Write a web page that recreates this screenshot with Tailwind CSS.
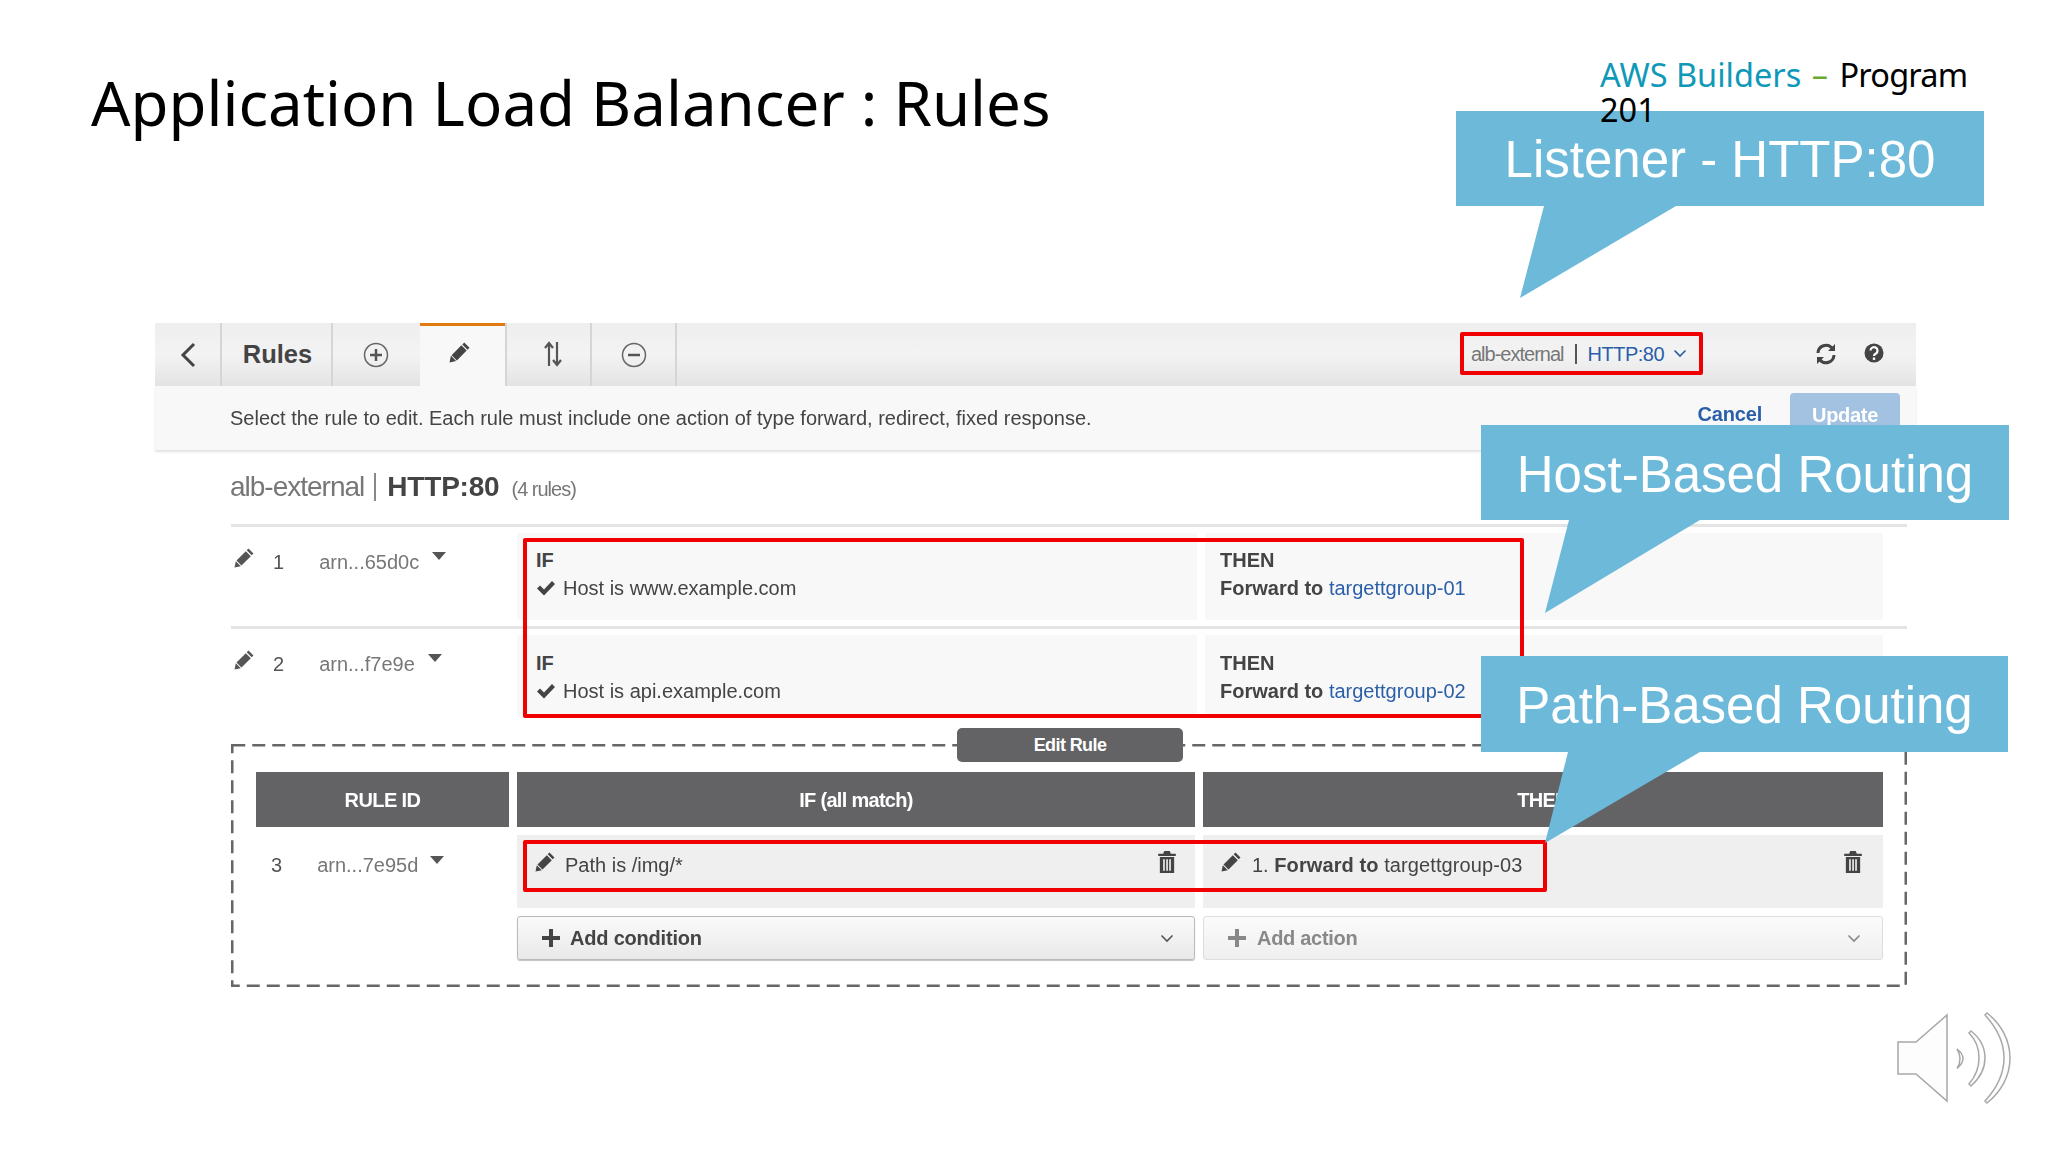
<!DOCTYPE html>
<html lang="en">
<head>
    <meta charset="UTF-8">
    <title>Application Load Balancer : Rules</title>
    <script src="https://cdn.jsdelivr.net/npm/@tailwindcss/browser@4"></script>
</head>
<body class="bg-white">
    <!-- icon sprite -->
    <svg class="hidden">
        <symbol id="pencil" viewBox="0 0 20 20">
            <path d="M14.500 0.500l5 5-1.800 1.800-5-5zM11.800 3.200l5 5-9.300 9.300-5-5zM1.800 13.200l5 5L0.500 19.500z" fill="currentColor"/>
        </symbol>
        <symbol id="trash" viewBox="0 0 18 20">
            <path d="M6.500 0h5l1 2.500H17v2H1v-2h4.500zM2.500 5.500h13V20h-13zM5.500 7.500v10.500h1.500V7.500zM8.300 7.500v10.500h1.500V7.500zM11 7.500v10.500h1.500V7.500z" fill="currentColor" fill-rule="evenodd"/>
        </symbol>
        <symbol id="check" viewBox="0 0 20 16">
            <path d="M1 8.500l3-3 4 4 8-8.500 3 3L8 15.500z" fill="currentColor"/>
        </symbol>
        <symbol id="plus" viewBox="0 0 18 18">
            <path d="M7 0h4v7h7v4h-7v7H7v-7H0V7h7z" fill="currentColor"/>
        </symbol>
        <symbol id="caret" viewBox="0 0 14 8">
            <path d="M0 0h14L7 8z" fill="currentColor"/>
        </symbol>
        <symbol id="chevron" viewBox="0 0 14 9">
            <path d="M1.500 1.500L7 7l5.500-5.500" fill="none" stroke="currentColor" stroke-width="1.600"/>
        </symbol>
    </svg>

    <div class="relative w-[2048px] h-[1152px] overflow-hidden bg-white font-['Liberation_Sans',sans-serif]">
        <!-- slide title -->
        <header class="flex h-[323px] pl-[91px] pt-[62px]">
            <h1 class="w-[1509px] text-[61.8px] leading-[80px] text-black font-['Noto_Sans',sans-serif]">Application Load Balancer : Rules</h1>
            <!-- 201 wraps over the first callout -->
            <p class="relative z-10 mt-[-5px] h-[72px] w-[385px] text-[32.5px] leading-[35px] text-black font-['Noto_Sans',sans-serif]"><span class="text-[#0f99b8]">AWS Builders</span> <span class="ml-[2px] mr-[3px] text-[#6aab2f]">–</span> <span class="tracking-[-0.8px]">Program</span> 201</p>
        </header>

        <!-- console screenshot -->
        <main class="ml-[155px] w-[1761px] blur-[0.4px]">
            <!-- toolbar -->
            <div class="flex h-[63px] bg-gradient-to-b from-[#eeeeef] via-[#f3f3f4] to-[#e3e3e4] text-[#444]">
                <div class="flex w-[67px] items-center justify-center border-r-2 border-[#d5d5d6]">
                    <svg width="16" height="26" viewBox="0 0 16 26"><path d="M14 2L3 13l11 11" fill="none" stroke="#444" stroke-width="3"/></svg>
                </div>
                <div class="flex w-[111px] items-center justify-center border-r-2 border-[#d5d5d6] pl-[2px] pb-[1px] text-[25.500px] font-bold">Rules</div>
                <div class="flex w-[87px] items-center justify-center pr-[2px]">
                    <svg width="26" height="26" viewBox="0 0 26 26"><circle cx="13" cy="13" r="11.500" fill="none" stroke="#666" stroke-width="1.500"/><path d="M13 7v12M7 13h12" stroke="#555" stroke-width="2.500"/></svg>
                </div>
                <div class="flex w-[85px] items-center justify-center border-t-[3px] border-[#e07b10] bg-[#f8f8f9] pb-[7px] pr-[6px]">
                    <svg class="w-[21px] h-[21px] text-[#444]"><use href="#pencil"/></svg>
                </div>
                <div class="flex w-[87px] items-center justify-center border-x-2 border-[#d5d5d6] pl-[8px] pb-[2px]">
                    <svg width="20" height="26" viewBox="0 0 20 26"><path d="M6 25V3M2 7l4-5 4 5M14 1v22M10 19l4 5 4-5" fill="none" stroke="#555" stroke-width="2.200"/></svg>
                </div>
                <div class="flex w-[85px] items-center justify-center border-r-2 border-[#d5d5d6]">
                    <svg width="26" height="26" viewBox="0 0 26 26"><circle cx="13" cy="13" r="11.500" fill="none" stroke="#666" stroke-width="1.500"/><path d="M7 13h12" stroke="#555" stroke-width="2.500"/></svg>
                </div>
                <div class="flex flex-1 items-center pl-[794px] pb-[2px]">
                    <span class="text-[20px] tracking-[-1px] text-[#777]">alb-external</span>
                    <span class="ml-[11px] mr-[11px] h-[20px] w-[2px] bg-[#555]"></span>
                    <span class="text-[20px] tracking-[-0.5px] text-[#2a5fa8]">HTTP:80</span>
                    <svg class="ml-[9px] w-[14px] h-[9px] text-[#2a5fa8]"><use href="#chevron"/></svg>
                    <svg class="ml-[128px]" width="22" height="22" viewBox="0 0 22 22"><path d="M3 10a8 8 0 0 1 14-5M19 12a8 8 0 0 1-14 5" fill="none" stroke="#444" stroke-width="3"/><path d="M20 1v7h-7zM2 21v-7h7z" fill="#444"/></svg>
                    <svg class="ml-[27px] mb-[2px]" width="20" height="22" viewBox="0 0 20 22"><circle cx="10" cy="11" r="9.500" fill="#444"/><path d="M6.500 8.500a3.500 3.500 0 1 1 5.500 3c-1.300.8-2 1.200-2 2.500" fill="none" stroke="#fff" stroke-width="2.200"/><rect x="8.800" y="15.500" width="2.400" height="2.400" fill="#fff"/></svg>
                </div>
            </div>
            <!-- hint bar -->
            <div class="flex h-[64px] items-center bg-[#f8f8f9] pl-[75px] shadow-[0_2px_2px_rgba(0,0,0,0.12)]">
                <p class="flex-1 text-[20px] text-[#444]">Select the rule to edit. Each rule must include one action of type forward, redirect, fixed response.</p>
                <span class="mr-[28px] pb-[8px] text-[20px] font-bold tracking-[-0.2px] text-[#2a5fa8]">Cancel</span>
                <span class="mr-[16px] mt-[7px] flex h-[57px] w-[110px] items-start justify-center self-start rounded-t-[4px] bg-[#a3c1e0] pt-[7px] text-[20px] font-bold tracking-[-0.3px] text-white">Update</span>
            </div>
            <!-- rule list -->
            <div class="ml-[76px] w-[1676px]">
                <div class="flex h-[77px] items-center border-b-[3px] border-[#e4e4e5] pb-[3px] pt-[2px]">
                    <span class="ml-[-1px] text-[28px] tracking-[-1px] text-[#777]">alb-external</span>
                    <span class="ml-[10px] mr-[11px] h-[28px] w-[2px] bg-[#888]"></span>
                    <span class="text-[28px] font-bold tracking-[-0.2px] text-[#444]">HTTP:80</span>
                    <span class="ml-[12px] mt-[4px] text-[20px] tracking-[-1px] text-[#777]">(4 rules)</span>
                </div>
                <div class="grid h-[102px] grid-cols-[278px_680px_678px] gap-x-[8px] border-b-[3px] border-[#e4e4e5] pt-[6px] pb-[6px]">
                    <div class="flex items-start pt-[14px] pl-[3px] text-[20px] text-[#555]">
                        <svg class="mt-[1px] w-[20px] h-[20px] text-[#555]"><use href="#pencil"/></svg>
                        <span class="ml-[19px]">1</span>
                        <span class="ml-[35px] text-[#777]">arn...65d0c</span>
                        <svg class="ml-[13px] mt-[5px] w-[14px] h-[8px]"><use href="#caret"/></svg>
                    </div>
                    <div class="bg-[#f8f8f9] pl-[19px] pt-[13px] text-[20px] leading-[28px] text-[#444]">
                        <p class="font-bold">IF</p>
                        <p class="flex items-center"><svg class="mr-[7px] w-[20px] h-[16px]"><use href="#check"/></svg>Host is www.example.com</p>
                    </div>
                    <div class="bg-[#f8f8f9] pl-[15px] pt-[13px] text-[20px] leading-[28px] text-[#444]">
                        <p class="font-bold">THEN</p>
                        <p><b>Forward to</b> <span class="text-[#2a5fa8]">targettgroup-01</span></p>
                    </div>
                </div>
                <div class="grid h-[115px] grid-cols-[278px_680px_678px] gap-x-[8px] pt-[6px] pb-[27px]">
                    <div class="flex items-start pt-[14px] pl-[3px] text-[20px] text-[#555]">
                        <svg class="mt-[1px] w-[20px] h-[20px] text-[#555]"><use href="#pencil"/></svg>
                        <span class="ml-[19px]">2</span>
                        <span class="ml-[35px] text-[#777]">arn...f7e9e</span>
                        <svg class="ml-[13px] mt-[5px] w-[14px] h-[8px]"><use href="#caret"/></svg>
                    </div>
                    <div class="bg-[#f8f8f9] pl-[19px] pt-[14px] text-[20px] leading-[28px] text-[#444]">
                        <p class="font-bold">IF</p>
                        <p class="flex items-center"><svg class="mr-[7px] w-[20px] h-[16px]"><use href="#check"/></svg>Host is api.example.com</p>
                    </div>
                    <div class="bg-[#f8f8f9] pl-[15px] pt-[14px] text-[20px] leading-[28px] text-[#444]">
                        <p class="font-bold">THEN</p>
                        <p><b>Forward to</b> <span class="text-[#2a5fa8]">targettgroup-02</span></p>
                    </div>
                </div>
                <!-- edit rule box, dashes drawn with svg to get the long dash -->
                <div class="relative h-[243px] pl-[25px] pt-[28px]">
                    <svg class="absolute left-0 top-0" width="1676" height="243"><rect x="1.250" y="1.250" width="1673.500" height="240.500" fill="none" stroke="#666" stroke-width="2.500" stroke-dasharray="13 7"/></svg>
                    <span class="absolute left-[726px] top-[-16px] flex h-[34px] w-[226px] items-center justify-center rounded-[5px] bg-[#636366] text-[18px] font-bold tracking-[-0.6px] text-white">Edit Rule</span>
                    <div class="relative grid grid-cols-[253px_678px_680px] gap-x-[8px]">
                        <div class="flex h-[55px] items-center justify-center bg-[#636366] text-[20px] font-bold tracking-[-0.6px] text-white">RULE ID</div>
                        <div class="flex h-[55px] items-center justify-center bg-[#636366] text-[20px] font-bold tracking-[-0.7px] text-white">IF (all match)</div>
                        <div class="flex h-[55px] items-center justify-center bg-[#636366] text-[20px] font-bold tracking-[-0.7px] text-white">THEN</div>

                        <div class="mt-[8px] flex items-start pl-[15px] pt-[15px] text-[20px] text-[#555]">
                            <span>3</span>
                            <span class="ml-[35px] text-[#777]">arn...7e95d</span>
                            <svg class="ml-[12px] mt-[6px] w-[14px] h-[8px]"><use href="#caret"/></svg>
                        </div>
                        <div class="mt-[8px] flex h-[73px] items-start bg-[#efeff0] pl-[18px] pr-[18px] pt-[15px] text-[20px] text-[#444]">
                            <svg class="mt-[2px] w-[20px] h-[20px]"><use href="#pencil"/></svg>
                            <span class="ml-[10px] flex-1">Path is /img/*</span>
                            <svg class="mt-[1px] w-[20px] h-[22px]"><use href="#trash"/></svg>
                        </div>
                        <div class="mt-[8px] flex h-[73px] items-start bg-[#efeff0] pl-[18px] pr-[20px] pt-[15px] text-[20px] text-[#444]">
                            <svg class="mt-[2px] w-[20px] h-[20px]"><use href="#pencil"/></svg>
                            <span class="ml-[11px] flex-1">1. <b class="tracking-[0.1px]">Forward to</b> <span class="tracking-[0.1px]">targettgroup-03</span></span>
                            <svg class="mt-[1px] w-[20px] h-[22px]"><use href="#trash"/></svg>
                        </div>

                        <div></div>
                        <div class="mt-[8px] flex h-[44px] items-center rounded-[3px] border border-[#bbb] bg-gradient-to-b from-[#fafafa] to-[#e9e9ea] pl-[24px] pr-[20px] text-[20px] font-bold tracking-[-0.2px] text-[#444] shadow-[0_1px_1px_rgba(0,0,0,0.25)]">
                            <svg class="mr-[10px] w-[18px] h-[18px]"><use href="#plus"/></svg>
                            <span class="flex-1">Add condition</span>
                            <svg class="w-[14px] h-[9px] text-[#555]"><use href="#chevron"/></svg>
                        </div>
                        <div class="mt-[8px] flex h-[44px] items-center rounded-[3px] border border-[#ddd] bg-gradient-to-b from-[#fbfbfb] to-[#efeff0] pl-[24px] pr-[21px] text-[20px] font-bold tracking-[-0.3px] text-[#888]">
                            <svg class="mr-[11px] w-[18px] h-[18px]"><use href="#plus"/></svg>
                            <span class="flex-1">Add action</span>
                            <svg class="w-[14px] h-[9px]"><use href="#chevron"/></svg>
                        </div>
                    </div>
                </div>
            </div>
        </main>

        <!-- red highlight boxes over the screenshot -->
        <div class="absolute left-[1460px] top-[332px] h-[43px] w-[243px] rounded-[2px] border-4 border-[#f00000]"></div>
        <div class="absolute left-[523px] top-[538px] h-[180px] w-[1001px] rounded-[2px] border-4 border-[#f00000]"></div>
        <div class="absolute left-[523px] top-[840px] h-[52px] w-[1024px] rounded-[2px] border-4 border-[#f00000]"></div>

        <!-- callouts -->
        <div class="absolute left-[1456px] top-[111px] flex h-[95px] w-[528px] items-center justify-center bg-[#6db9d9] pt-[4px] text-[51px] text-white">Listener - HTTP:80</div>
        <svg class="absolute left-[1456px] top-[206px]" width="230" height="94"><path d="M88 0L64 92 220 0z" fill="#6db9d9"/></svg>

        <div class="absolute left-[1481px] top-[425px] flex h-[95px] w-[528px] items-center justify-center bg-[#6db9d9] pt-[5px] text-[51px] text-white">Host-Based Routing</div>
        <svg class="absolute left-[1481px] top-[520px]" width="230" height="94"><path d="M88 0L64 93 219 0z" fill="#6db9d9"/></svg>

        <div class="absolute left-[1481px] top-[656px] flex h-[96px] w-[527px] items-center justify-center bg-[#6db9d9] pt-[5px] text-[51px] text-white">Path-Based Routing</div>
        <svg class="absolute left-[1481px] top-[752px]" width="230" height="94"><path d="M87 0L64 91 219 0z" fill="#6db9d9"/></svg>

        <!-- speaker -->
        <svg class="absolute left-[1896px] top-[1011px]" width="118" height="94" viewBox="0 0 118 94" fill="#fdfdfd" stroke="#a8a8a8" stroke-width="1.500">
            <path d="M2 31h18L51 4v86L20 63H2z"/>
            <path d="M61 38c4 3 6 6 6 9.500s-2 6.500-6 10c2-3 3-6.500 3-10s-1-6.500-3-9.500z"/>
            <path d="M75 20c9 7 14 17 14 27s-5 20-14 28l-2-2c6-7 10-16 10-26s-4-19-10-25z"/>
            <path d="M91 2c14 11 23 27 23 45s-9 34-23 45l-2-2c11-12 19-26 19-43S100 16 89 4z"/>
        </svg>
    </div>
</body>
</html>
